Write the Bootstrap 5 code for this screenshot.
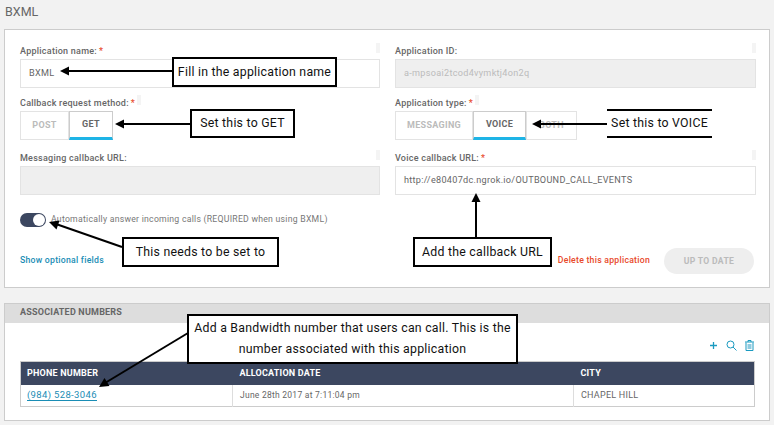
<!doctype html>
<html lang="en"><head><meta charset="utf-8">
<link href="https://cdn.jsdelivr.net/npm/bootstrap@5.3.0/dist/css/bootstrap.min.css" rel="stylesheet">
<style>
html,body{height:425px;overflow:hidden}
body{background:#f2f2f2;font-family:"Roboto","Noto Sans",sans-serif;color:#666;position:relative;padding:0 4px}
.page-title{font-size:12.500px;line-height:14px;color:#666;padding:5px 1px 10px;margin:0;font-weight:400}
.panel-box{background:#fff;border:1px solid #ccc;border-radius:0}
.app-panel{height:259px;padding:11px 15px 0;margin-bottom:15px}
.num-panel{height:118px}
.form-grid{display:grid;grid-template-columns:360px 361px;column-gap:15px}
.fld{height:52px}
.fld-tall{height:55px}
.lbl{display:flex;font-size:9px;line-height:10px;font-weight:500;color:#666;margin:5px 0 3px;letter-spacing:.25px;gap:2px}
.req{color:#e8492a}
.tick{width:4px;height:10px;background:#f4f4f4;margin-top:-3px}
.tick-end{margin-left:auto}
.txt-box{height:29px;border:1px solid #e3e3e3;font-size:9.100px;line-height:27px;padding:0 8px;color:#666;letter-spacing:.3px}
.txt-box.off{background:#efefef;color:#bbb}
.seg{display:inline-flex;height:29px}
.seg-item{border:1px solid #e3e3e3;font-size:9px;font-weight:700;color:#bbb;display:flex;align-items:center;justify-content:center;letter-spacing:.3px}
.seg-on{color:#666;border-color:#ccc;border-bottom:3px solid #1eb4e6}
.toggle-row{display:flex;align-items:center;gap:5px;height:14px;margin-top:18px;font-size:8.700px;letter-spacing:.25px;color:#777}
.sw{width:26px;height:14px;border-radius:7px;background:#3c4760;position:relative;display:block}
.sw::after{content:"";position:absolute;right:1px;top:1px;width:12px;height:12px;border-radius:50%;background:#fff}
.foot-row{display:flex;align-items:center;margin-top:21px;height:26px}
.opt-link{font-size:8.700px;font-weight:500;color:#1a8db5;text-decoration:none;letter-spacing:.25px}
.del-link{font-size:8.700px;font-weight:500;color:#e8492a;text-decoration:none;letter-spacing:.25px;margin-left:auto;margin-right:14px}
.save-btn{width:90px;height:26px;border-radius:13px;background:#eee;border:0;color:#bbb;font-size:8.600px;font-weight:700;letter-spacing:.3px;padding:0}
.num-head{background:#ddd;height:19px;font-size:9px;font-weight:700;line-height:17px;padding-left:15px;color:#666;letter-spacing:.2px}
.tool-row{display:flex;justify-content:flex-end;align-items:center;gap:8px;height:38px;padding:6px 15px 0 0}
.num-wrap{margin:0 15px}
.num-table{width:735px;margin:0;border:1px solid #ccc;table-layout:fixed;font-size:9px;border-collapse:collapse}
.num-table th{background:#3c4760;color:#fff;font-weight:700;height:23px;padding:0 6px;border:0;letter-spacing:.2px;vertical-align:middle}
.num-table th+th{padding-left:7px}
.num-table td{height:22px;padding:0 7px;color:#666;border:0;border-left:1px solid #ddd;letter-spacing:.25px;background:#fff;vertical-align:middle}
.num-table td:first-child{border-left:0;padding-left:6px}
.date-cell{font-size:8.500px}
.tel{color:#1a8db5;font-size:9.500px;text-decoration:none;border-bottom:1px solid #1a8db5;letter-spacing:.35px}
.note{position:absolute;background:#fff;border:2px solid #000;color:#111;font-size:12.300px;letter-spacing:.25px;display:flex;align-items:center;justify-content:center;text-align:center;white-space:nowrap}
.note-a{left:172px;top:57px;width:165px;height:30px}
.note-b{left:190px;top:109px;width:105px;height:29px}
.note-c{left:607px;top:109px;width:105px;height:29px;border-left:0;border-right:0}
.note-d{left:122px;top:237px;width:157px;height:30px}
.note-e{left:413px;top:237px;width:139px;height:30px}
.note-f{left:187px;top:314px;width:331px;height:50px;line-height:21px;white-space:normal}
.arrows{position:absolute;left:0;top:0;pointer-events:none}
</style></head><body>
<h1 class="page-title">BXML</h1>
<section class="panel-box app-panel">
 <div class="form-grid">
  <div class="fld"><label class="lbl">Application name: <span class="req">*</span><span class="tick tick-end"></span></label><div class="txt-box">BXML</div></div>
  <div class="fld"><label class="lbl">Application ID:<span class="tick tick-end"></span></label><div class="txt-box off">a-mpsoai2tcod4vymktj4on2q</div></div>
  <div class="fld-tall"><label class="lbl">Callback request method: <span class="req">*</span><span class="tick"></span></label><div class="seg"><span class="seg-item" style="width:49px">POST</span><span class="seg-item seg-on" style="width:44px">GET</span></div></div>
  <div class="fld-tall"><label class="lbl">Application type: <span class="req">*</span><span class="tick"></span></label><div class="seg"><span class="seg-item" style="width:78px">MESSAGING</span><span class="seg-item seg-on" style="width:53px">VOICE</span><span class="seg-item" style="width:51px">BOTH</span></div></div>
  <div><label class="lbl">Messaging callback URL:<span class="tick tick-end"></span></label><div class="txt-box off"></div></div>
  <div><label class="lbl">Voice callback URL: <span class="req">*</span><span class="tick tick-end"></span></label><div class="txt-box">http://e80407dc.ngrok.io/OUTBOUND_CALL_EVENTS</div></div>
 </div>
 <div class="toggle-row"><span class="sw"></span><span>Automatically answer incoming calls (REQUIRED when using BXML)</span></div>
 <div class="foot-row"><a class="opt-link" href="#">Show optional fields</a><a class="del-link" href="#">Delete this application</a><button class="save-btn" type="button">UP TO DATE</button></div>
</section>
<section class="panel-box num-panel">
 <div class="num-head">ASSOCIATED NUMBERS</div>
 <div class="tool-row">
  <svg width="9" height="9" viewBox="0 0 9 9"><path d="M4.500 1V8M1 4.500H8" stroke="#1a9ac0" stroke-width="1.300" fill="none"/></svg>
  <svg width="11" height="11" viewBox="0 0 11 11"><circle cx="4.500" cy="4.500" r="3.500" stroke="#1a9ac0" fill="none"/><path d="M7 7l3.500 3.500" stroke="#1a9ac0" fill="none"/></svg>
  <svg width="9" height="11" viewBox="0 0 9 11"><path d="M0 2H9M3 2V.5H6V2M1 2.500V10.500H8V2.500" stroke="#1a9ac0" stroke-width="1" fill="none"/><path d="M2.500 4H6.500V9H2.500z" fill="#8fcbe0"/></svg>
 </div>
 <div class="num-wrap"><table class="table num-table"><colgroup><col style="width:212px"><col style="width:341px"><col></colgroup>
  <thead><tr><th>PHONE NUMBER</th><th>ALLOCATION DATE</th><th>CITY</th></tr></thead>
  <tbody><tr><td><a class="tel" href="#">(984) 528-3046</a></td><td class="date-cell">June 28th 2017 at 7:11:04 pm</td><td>CHAPEL HILL</td></tr></tbody></table></div>
</section>
<div class="note note-a">Fill in the application name</div>
<div class="note note-b">Set this to GET</div>
<div class="note note-c">Set this to VOICE</div>
<div class="note note-d">This needs to be set to</div>
<div class="note note-e">Add the callback URL</div>
<div class="note note-f">Add a Bandwidth number that users can call. This is the number associated with this application</div>
<svg class="arrows" width="774" height="425" viewBox="0 0 774 425">
 <g stroke="#000" stroke-width="2" fill="#000">
  <path d="M172 71H66"/><path stroke="none" d="M60 71l9-4.500v9z"/>
  <path d="M190 124H121"/><path stroke="none" d="M115 124l9-4.500v9z"/>
  <path d="M607 124H538"/><path stroke="none" d="M532 124l9-4.500v9z"/>
  <path d="M122 247L56 224"/><path stroke="none" d="M49 222l10.500-1.500-3 9z"/>
  <path d="M476 237V199"/><path stroke="none" d="M476 193l4.500 9h-9z"/>
  <path d="M188 333L105 383"/><path stroke="none" d="M99 387l5.500-9 5 8z"/>
 </g>
</svg>
<script src="https://cdn.jsdelivr.net/npm/bootstrap@5.3.0/dist/js/bootstrap.bundle.min.js"></script>
</body></html>
